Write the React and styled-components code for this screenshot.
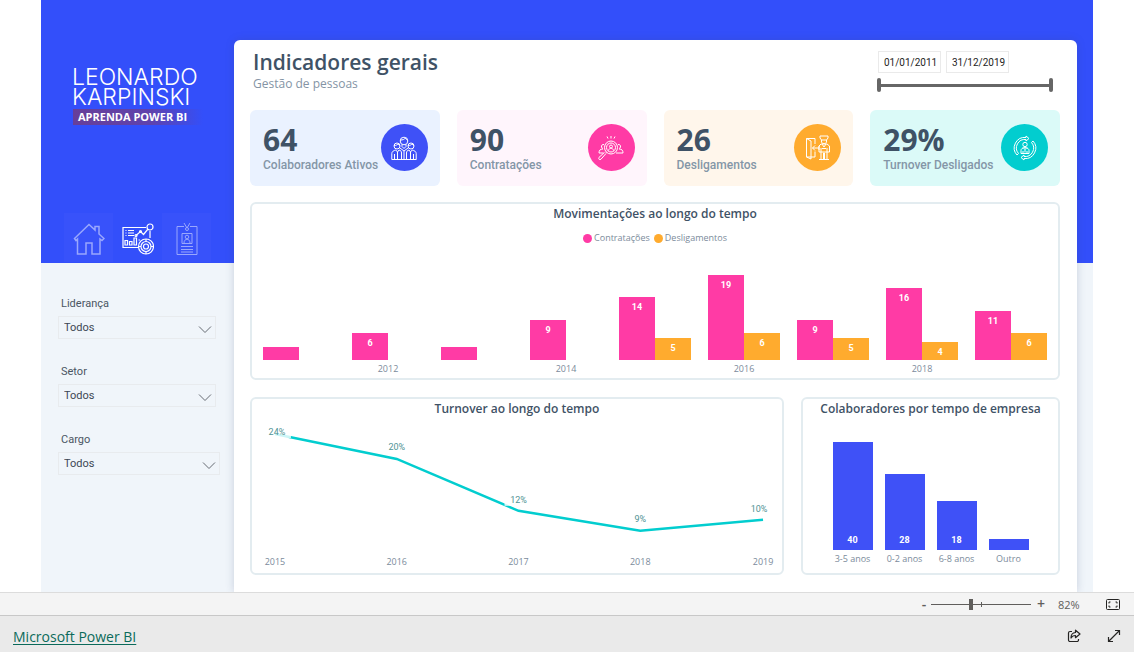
import React, { useState } from "react";
import styled, { createGlobalStyle, css } from "styled-components";

const GlobalStyle = createGlobalStyle`
  * {
    box-sizing: border-box;
  }
  body {
    margin: 0;
    background: #fff;
    font-family: "Open Sans", "Noto Sans", sans-serif;
    color: #3f5266;
  }
  button, input, select {
    font-family: inherit;
  }
`;

const din = css`
  font-family: Roboto, "Open Sans", sans-serif;
`;

const Page = styled.div`
  display: flex;
  flex-direction: column;
  min-height: 100vh;
`;

const Canvas = styled.main`
  flex: 1;
  display: flex;
  margin: 0 41px;
  background: linear-gradient(#334ffa 263px, #f0f5fa 263px);
`;

const Sidebar = styled.aside`
  width: 193px;
  flex-shrink: 0;
  display: flex;
  flex-direction: column;
`;

const Brand = styled.div`
  height: 213px;
  padding: 67px 0 0 31px;
  color: #fff;
`;

const BrandName = styled.div`
  font-family: Inter, sans-serif;
  font-weight: 300;
  font-size: 23px;
  line-height: 20px;
`;

const BrandTag = styled.div`
  width: 130px;
  margin: 2px 0 0 1px;
  padding-left: 5px;
  font-size: 11px;
  font-weight: 700;
  line-height: 16px;
  white-space: nowrap;
  background: linear-gradient(90deg, #673f99 0%, #5f42ac 60%, rgba(51, 79, 250, 0) 100%);
`;

const Nav = styled.nav`
  display: flex;
  padding-left: 23px;
  height: 49px;
`;

const NavButton = styled.button`
  width: 49px;
  height: 49px;
  padding: 2px 0 0;
  border: 0;
  display: flex;
  align-items: center;
  justify-content: center;
  cursor: pointer;
  color: ${({ $active }) => ($active ? "#fff" : "#99a7fd")};
  background: ${({ $active }) => ($active ? "transparent" : "#3852fa")};
`;

const Filters = styled.form`
  display: flex;
  flex-direction: column;
  gap: 26px;
  padding: 35px 14px 0 17px;
`;

const Filter = styled.div`
  display: flex;
  flex-direction: column;
  gap: 5px;
  ${din}
`;

const FilterLabel = styled.label`
  padding-left: 3px;
  font-size: 11px;
  line-height: 14px;
  color: #4b5663;
`;

const SelectBox = styled.div`
  position: relative;
  margin-right: ${({ $wide }) => ($wide ? "0" : "4px")};

  select {
    display: block;
    width: 100%;
    height: 23px;
    padding: 0 24px 0 5px;
    border: 1px solid #e8ebee;
    border-radius: 0;
    background: transparent;
    appearance: none;
    ${din}
    font-size: 11px;
    color: #3d4754;
  }

  svg {
    position: absolute;
    right: 4px;
    top: 9px;
    pointer-events: none;
  }
`;

const Panel = styled.section`
  flex: 1;
  min-width: 0;
  display: flex;
  flex-direction: column;
  margin: 40px 16px 0 0;
  padding: 0 17px 17px 16px;
  background: #fff;
  border-radius: 6px 6px 0 0;
  box-shadow: 0 0 8px rgba(60, 75, 120, 0.22);
  clip-path: inset(-10px -10px 0 -10px);
`;

const Header = styled.header`
  display: flex;
  justify-content: space-between;
  height: 70px;
  padding: 8px 7px 0 3px;
`;

const Title = styled.h1`
  margin: 0;
  font-size: 21px;
  font-weight: 600;
  line-height: 28px;
`;

const Subtitle = styled.p`
  margin: 0;
  font-size: 12px;
  line-height: 16px;
  color: #8494a5;
`;

const Period = styled.div`
  width: 176px;
  padding-top: 3px;
`;

const Dates = styled.div`
  display: flex;
  gap: 5px;
  padding-left: 1px;
`;

const DateInput = styled.input`
  width: 63px;
  height: 22px;
  padding: 0 0 0 5px;
  border: 1px solid #eaeaea;
  background: #fff;
  && {
    ${din}
  }
  font-size: 10px;
  color: #252423;
`;

const DateRange = styled.div`
  position: relative;
  height: 14px;
  margin-top: 5px;
  background: linear-gradient(#666, #666) center / 100% 3px no-repeat;

  input {
    position: absolute;
    inset: 0;
    width: 100%;
    height: 14px;
    margin: 0;
    appearance: none;
    background: transparent;
    pointer-events: none;
  }
  input::-webkit-slider-thumb {
    appearance: none;
    width: 4px;
    height: 14px;
    border-radius: 2px;
    background: #666;
    pointer-events: auto;
    cursor: pointer;
  }
`;

const Cards = styled.div`
  display: grid;
  grid-template-columns: repeat(4, 1fr);
  gap: 17px;
  margin-bottom: 16px;
`;

const Card = styled.article`
  display: flex;
  align-items: center;
  justify-content: space-between;
  height: 76px;
  padding: 0 12px 1px 13px;
  border-radius: 6px;
  background: ${({ $bg }) => $bg};
`;

const CardValue = styled.div`
  font-size: 30px;
  font-weight: 700;
  line-height: 34px;
`;

const CardLabel = styled.div`
  ${din}
  font-size: 12px;
  font-weight: 500;
  line-height: 16px;
  white-space: nowrap;
  color: #8496a7;
`;

const CardIcon = styled.div`
  flex-shrink: 0;
  width: 47px;
  height: 47px;
  border-radius: 50%;
  display: flex;
  align-items: center;
  justify-content: center;
  color: #fff;
  background: ${({ $color }) => $color};
`;

const Charts = styled.div`
  flex: 1;
  display: grid;
  grid-template-columns: 534fr 259fr;
  grid-template-rows: 178px 178px;
  gap: 17px;
`;

const ChartBox = styled.section`
  display: flex;
  flex-direction: column;
  min-width: 0;
  grid-column: ${({ $full }) => ($full ? "1 / -1" : "auto")};
  border: 2px solid #e3ecf0;
  border-radius: 6px;
`;

const ChartTitle = styled.h2`
  margin: 0;
  font-size: 12px;
  font-weight: 600;
  line-height: 20px;
  text-align: center;
  white-space: nowrap;
`;

const Legend = styled.div`
  display: flex;
  justify-content: center;
  gap: 4px;
  margin-top: 7px;
  font-size: 9px;
  line-height: 14px;
  color: #7b8b9b;
`;

const LegendItem = styled.span`
  display: flex;
  align-items: center;
  gap: 2px;

  &::before {
    content: "";
    width: 9px;
    height: 9px;
    border-radius: 50%;
    background: ${({ $color }) => $color};
  }
`;

const Plot = styled.div`
  flex: 1;
  display: flex;
  align-items: flex-end;
  justify-content: ${({ $center }) => ($center ? "center" : "space-between")};
  gap: ${({ $center }) => ($center ? "12px" : "0")};
  padding: ${({ $center }) => ($center ? "0 0 7px" : "0 11px 2px")};
`;

const Group = styled.div`
  width: ${({ $width }) => $width}px;
`;

const Bars = styled.div`
  display: flex;
  align-items: flex-end;
`;

const Bar = styled.div`
  ${din}
  flex: 0 0 ${({ $width }) => $width}px;
  display: flex;
  justify-content: center;
  align-items: ${({ $labelEnd }) => ($labelEnd ? "flex-end" : "flex-start")};
  padding: 3px 0;
  font-size: 9px;
  font-weight: 700;
  line-height: 14px;
  color: #fff;
  background: ${({ $color }) => $color};
`;

const AxisLabel = styled.div`
  height: 16px;
  font-size: 9px;
  line-height: 17px;
  text-align: center;
  white-space: nowrap;
  color: #7b8b9b;
`;

const LineSvg = styled.svg`
  display: block;
  width: 100%;
  overflow: visible;

  .axis {
    font-size: 9px;
    fill: #7b8b9b;
  }
  .value {
    ${din}
    font-size: 9px;
    fill: #4f9294;
  }
`;

const ZoomBar = styled.div`
  display: flex;
  align-items: center;
  justify-content: flex-end;
  height: 23px;
  padding-right: 14px;
  border-top: 1px solid #dcdcdc;
  background: #f4f4f4;
  color: #605e5c;
`;

const ZoomButton = styled.button`
  width: 10px;
  padding: 0;
  border: 0;
  background: none;
  font-size: 14px;
  font-weight: 600;
  line-height: 20px;
  color: #605e5c;
  cursor: pointer;
`;

const ZoomTrack = styled.input`
  width: 100px;
  height: 12px;
  margin: 0 5px 0 2px;
  appearance: none;
  background:
    linear-gradient(#605e5c, #605e5c) 50px center / 1px 5px no-repeat,
    linear-gradient(#605e5c, #605e5c) center / 100% 1px no-repeat;

  &::-webkit-slider-thumb {
    appearance: none;
    width: 4px;
    height: 11px;
    background: #605e5c;
  }
`;

const ZoomValue = styled.span`
  width: 60px;
  padding-left: 12px;
  font-size: 11px;
`;

const IconButton = styled.button`
  display: flex;
  padding: 0;
  border: 0;
  background: none;
  color: #252423;
  cursor: pointer;
`;

const Footer = styled.footer`
  display: flex;
  align-items: center;
  height: 37px;
  padding: 4px 13px 0;
  border-top: 1px solid #c8c8c8;
  background: #eaeaea;
`;

const FooterLink = styled.a`
  margin-right: auto;
  font-size: 14px;
  color: #0b6a5a;
  text-underline-offset: 2px;
`;

const FooterActions = styled.div`
  display: flex;
  gap: 26px;
`;

function Icon({ width = 32, height = 32, box, stroke = 1, children }) {
  return (
    <svg
      width={width}
      height={height}
      viewBox={box || `0 0 ${width} ${height}`}
      fill="none"
      stroke="currentColor"
      strokeWidth={stroke}
      aria-hidden="true"
    >
      {children}
    </svg>
  );
}

const HomeIcon = () => (
  <Icon stroke={1.5}>
    <path d="M1.500 15.500 16 1.500l6 5.500V3.500h4v7.500l5 4.500-2 2-2-1.500v15h-8v-11h-6v11H4.500V16L3 17.500z" />
  </Icon>
);

const DashboardIcon = () => (
  <Icon stroke={1.2}>
    <path d="M24 4.500H1v20h16M28 8v7" />
    <path d="M3.500 7.500h1M3.500 10h1M3.500 12.500h1M6 7.500h6M6 10h6M6 12.500h6" />
    <path d="M3 17.500h2.500v4.500H3zM7.500 18.500H10V22H7.500zM12 15h2.500v7H12zM16.500 17H18" />
    <path d="m14 12.500 4.500-4 3 3L26 6" />
    <circle cx="14" cy="12.500" r="1" />
    <circle cx="18.500" cy="8.500" r="1" />
    <circle cx="28" cy="4" r="3" />
    <circle cx="24" cy="23.500" r="7.500" />
    <circle cx="24" cy="23.500" r="5" />
    <circle cx="24" cy="23.500" r="2.500" />
    <path d="M24 16v2.500M24 28.500V31M16.500 23.500h2.500M29 23.500h2.500" />
  </Icon>
);

const BadgeIcon = () => (
  <Icon width={22}>
    <path d="M8 3.500H1v28h20v-28h-7M8 0l3 5 3-5" />
    <circle cx="11" cy="6" r="1.500" />
    <path d="M6 10.500h10v10H6z" />
    <circle cx="11" cy="14" r="1.800" />
    <path d="M8 20c0-5 6-5 6 0M5 23.500h12M5 26.500h12M5 29h12" />
  </Icon>
);

const TeamIcon = () => (
  <Icon width={26} height={26}>
    <circle cx="13" cy="6" r="3.800" />
    <path d="M9.500 5c2 0 4-.5 5-2 .5 1.500 1.500 2 2.200 2M11 9.500v2l2 2 2-2v-2" />
    <circle cx="6" cy="11" r="3" />
    <circle cx="20" cy="11" r="3" />
    <path d="M3 10.500c2 0 3-.5 4-1.500l2 1.500M17 10.500c2 0 3-.5 4-1.500l2 1.500" />
    <path d="M.8 24.500v-6c0-2 2-3 4-3.500l1.700 2L8 15c2 .5 2.500 1.500 2.500 3v6.500M15.500 24.500V18c0-1.500.5-2.500 2.500-3l1.500 2 1.700-2c2 .5 4 1.500 4 3.500v6zM9 13l4 3 4-3" />
    <path d="M.8 24.500h24.400M13 16v8M3.500 19v5M6.500 17v7M19.500 17v7M22.500 19v5" />
  </Icon>
);

const SearchPeopleIcon = () => (
  <Icon width={26} height={26}>
    <circle cx="13" cy="12.500" r="6.500" />
    <circle cx="13" cy="12.500" r="4.500" />
    <circle cx="13" cy="11.500" r="1.500" />
    <path d="M10.500 15.500c.5-3 4.500-3 5 0M8.500 17.200l-1 1M8 18.500 3 24.200c-1.400 1.200-3-.4-2-1.800l5.500-5" />
    <path d="M6 9.500a2 2 0 1 0-1 4M5 14c-3 0-4 1.500-4 4h4.500M20 9.500a2 2 0 1 1 1 4M21 14c3 0 4 1.500 4 4h-7" />
    <path d="M13 1v2.500M9 1.500l1 2M17 1.500l-1 2" />
  </Icon>
);

const LeaveIcon = () => (
  <Icon width={26} height={26}>
    <path d="M10 9V3.500H1.500V22H10v-5.500M1.500 3.500 6 6v18l-4.500-2" />
    <path d="M14 13H7.500m2.500-2.500L7.500 13l2.500 2.500M14 11v4" />
    <path d="M15 1h8v2l-1.500 2h-5L15 3zM16.500 5v2c0 2 5 2 5 0V5" />
    <path d="M16 9h6l2.500 2v6H22v-4M16 9l-2 2v6h2v-4M16 17v7.500h2.500V18h1v6.500H22V17zM17 9l2 3 2-3M17 13.500h4" />
    <path d="M14 24.500h10" />
  </Icon>
);

const TurnoverIcon = () => (
  <Icon width={26} height={26}>
    <path d="M14 1l3 2.500-3 2.500V4.500a8.500 8.500 0 0 0-7.500 14l-1.500 1.500A10.500 10.500 0 0 1 14 2.500z" />
    <path d="M12 25l-3-2.500 3-2.500v1.500a8.500 8.500 0 0 0 7.500-14L21 6A10.500 10.500 0 0 1 12 23.500z" />
    <circle cx="13" cy="9.500" r="2.200" />
    <path d="M9 18.500v-3c0-1.500 1-2.500 4-3 3 .5 4 1.500 4 3v3zM11 12.500l2 2 2-2M13 14.500v3M11 18v-2M15 18v-2" />
  </Icon>
);

const CARDS = [
  { value: "64", label: "Colaboradores Ativos", bg: "#eaf2ff", color: "#3f51f7", icon: TeamIcon },
  { value: "90", label: "Contratações", bg: "#fff5fc", color: "#ff3ba5", icon: SearchPeopleIcon },
  { value: "26", label: "Desligamentos", bg: "#fff6eb", color: "#ffab2e", icon: LeaveIcon },
  { value: "29%", label: "Turnover Desligados", bg: "#dbfaf8", color: "#02cdcf", icon: TurnoverIcon },
];

const MOVES = [
  { year: 2011, hired: 3 },
  { year: 2012, hired: 6 },
  { year: 2013, hired: 3 },
  { year: 2014, hired: 9 },
  { year: 2015, hired: 14, left: 5 },
  { year: 2016, hired: 19, left: 6 },
  { year: 2017, hired: 9, left: 5 },
  { year: 2018, hired: 16, left: 4 },
  { year: 2019, hired: 11, left: 6 },
];

const TENURE = [
  { label: "3-5 anos", count: 40 },
  { label: "0-2 anos", count: 28 },
  { label: "6-8 anos", count: 18 },
  { label: "Outro", count: 4 },
];

const TURNOVER = [
  { year: 2015, rate: "24%", x: 23, y: 16, lx: 25, ly: 17 },
  { year: 2016, rate: "20%", x: 145, y: 41, lx: 145, ly: 32 },
  { year: 2017, rate: "12%", x: 267, y: 93, lx: 267, ly: 85 },
  { year: 2018, rate: "9%", x: 389, y: 113, lx: 389, ly: 104 },
  { year: 2019, rate: "10%", x: 512, y: 102, lx: 508, ly: 94 },
];

const FILTERS = [
  { id: "lideranca", label: "Liderança" },
  { id: "setor", label: "Setor" },
  { id: "cargo", label: "Cargo", wide: true },
];

function SelectFilter({ id, label, wide }) {
  return (
    <Filter>
      <FilterLabel htmlFor={id}>{label}</FilterLabel>
      <SelectBox $wide={wide}>
        <select id={id}>
          <option>Todos</option>
        </select>
        <Icon width={14} height={9}>
          <path d="m1 1.500 6 6 6-6" stroke="#666b73" />
        </Icon>
      </SelectBox>
    </Filter>
  );
}

function MovesChart() {
  return (
    <ChartBox $full>
      <ChartTitle>Movimentações ao longo do tempo</ChartTitle>
      <Legend>
        <LegendItem $color="#ff3ba5">Contratações</LegendItem>
        <LegendItem $color="#ffab2e">Desligamentos</LegendItem>
      </Legend>
      <Plot>
        {MOVES.map(({ year, hired, left }) => (
          <Group key={year} $width={72}>
            <Bars>
              <Bar $width={36} $color="#ff3ba5" style={{ height: hired * 4.5 }}>
                {hired > 3 && hired}
              </Bar>
              {left && (
                <Bar $width={36} $color="#ffab2e" style={{ height: left * 4.5 }}>
                  {left}
                </Bar>
              )}
            </Bars>
            <AxisLabel>{year % 2 === 0 && year}</AxisLabel>
          </Group>
        ))}
      </Plot>
    </ChartBox>
  );
}

function TurnoverChart() {
  return (
    <ChartBox>
      <ChartTitle>Turnover ao longo do tempo</ChartTitle>
      <LineSvg viewBox="0 1 531 154" textAnchor="middle">
        <polyline
          points={TURNOVER.map((p) => `${p.x},${p.y}`).join(" ")}
          fill="none"
          stroke="#02cdcf"
          strokeWidth="2.5"
        />
        {TURNOVER.map((p) => (
          <g key={p.year}>
            <rect x={p.lx - 14} y={p.ly - 10} width="28" height="13" fill="#fff" opacity="0.8" />
            <text className="value" x={p.lx} y={p.ly}>{p.rate}</text>
            <text className="axis" x={p.x} y="147">{p.year}</text>
          </g>
        ))}
      </LineSvg>
    </ChartBox>
  );
}

function TenureChart() {
  return (
    <ChartBox>
      <ChartTitle>Colaboradores por tempo de empresa</ChartTitle>
      <Plot $center>
        {TENURE.map(({ label, count }) => (
          <Group key={label} $width={40}>
            <Bars>
              <Bar $width={40} $labelEnd $color="#3f51f7" style={{ height: count * 2.7 }}>
                {count > 4 && count}
              </Bar>
            </Bars>
            <AxisLabel>{label}</AxisLabel>
          </Group>
        ))}
      </Plot>
    </ChartBox>
  );
}

export default function App() {
  const [zoom, setZoom] = useState(82);

  return (
    <Page>
      <GlobalStyle />
      <Canvas>
        <Sidebar>
          <Brand>
            <BrandName>
              LEONARDO
              <br />
              KARPINSKI
            </BrandName>
            <BrandTag>APRENDA POWER BI</BrandTag>
          </Brand>
          <Nav>
            <NavButton aria-label="Início"><HomeIcon /></NavButton>
            <NavButton aria-label="Indicadores" $active><DashboardIcon /></NavButton>
            <NavButton aria-label="Colaboradores"><BadgeIcon /></NavButton>
          </Nav>
          <Filters>
            {FILTERS.map((f) => (
              <SelectFilter key={f.id} {...f} />
            ))}
          </Filters>
        </Sidebar>

        <Panel>
          <Header>
            <div>
              <Title>Indicadores gerais</Title>
              <Subtitle>Gestão de pessoas</Subtitle>
            </div>
            <Period>
              <Dates>
                <DateInput aria-label="Data inicial" defaultValue="01/01/2011" />
                <DateInput aria-label="Data final" defaultValue="31/12/2019" />
              </Dates>
              <DateRange>
                <input type="range" aria-label="Início do período" defaultValue="0" />
                <input type="range" aria-label="Fim do período" defaultValue="100" />
              </DateRange>
            </Period>
          </Header>

          <Cards>
            {CARDS.map(({ value, label, bg, color, icon: Glyph }) => (
              <Card key={label} $bg={bg}>
                <div>
                  <CardValue>{value}</CardValue>
                  <CardLabel>{label}</CardLabel>
                </div>
                <CardIcon $color={color}><Glyph /></CardIcon>
              </Card>
            ))}
          </Cards>

          <Charts>
            <MovesChart />
            <TurnoverChart />
            <TenureChart />
          </Charts>
        </Panel>
      </Canvas>

      <ZoomBar>
        <ZoomButton aria-label="Reduzir" onClick={() => setZoom(zoom - 10)}>-</ZoomButton>
        <ZoomTrack
          type="range"
          aria-label="Zoom"
          min="10"
          max="190"
          value={zoom}
          onChange={(e) => setZoom(Number(e.target.value))}
        />
        <ZoomButton aria-label="Ampliar" onClick={() => setZoom(zoom + 10)}>+</ZoomButton>
        <ZoomValue>{zoom}%</ZoomValue>
        <IconButton aria-label="Ajustar à página">
          <Icon width={14} height={11}>
            <rect x="0.5" y="0.5" width="13" height="10" rx="1" />
            <path d="M3 4.500V3h1.500M9.500 3H11v1.500M11 6.500V8H9.500M4.500 8H3V6.500" />
          </Icon>
        </IconButton>
      </ZoomBar>

      <Footer>
        <FooterLink href="#powerbi">Microsoft Power BI</FooterLink>
        <FooterActions>
          <IconButton aria-label="Compartilhar">
            <Icon width={14} height={14} stroke={1.2}>
              <path d="M5 2.500H3A1.500 1.500 0 0 0 1.500 4v7A1.500 1.500 0 0 0 3 12.500h7a1.500 1.500 0 0 0 1.500-1.500v-1" />
              <path d="M8.500 1.200 13 5 8.500 8.700V6.500C6.500 6.500 5 7 4 9c0-3 1.500-5.300 4.500-5.500z" strokeLinejoin="round" />
            </Icon>
          </IconButton>
          <IconButton aria-label="Tela cheia">
            <Icon width={14} height={14} stroke={1.2}>
              <path d="M1.500 12.500l11-11M8 1.500h4.500V6M6 12.500H1.500V8" />
            </Icon>
          </IconButton>
        </FooterActions>
      </Footer>
    </Page>
  );
}
